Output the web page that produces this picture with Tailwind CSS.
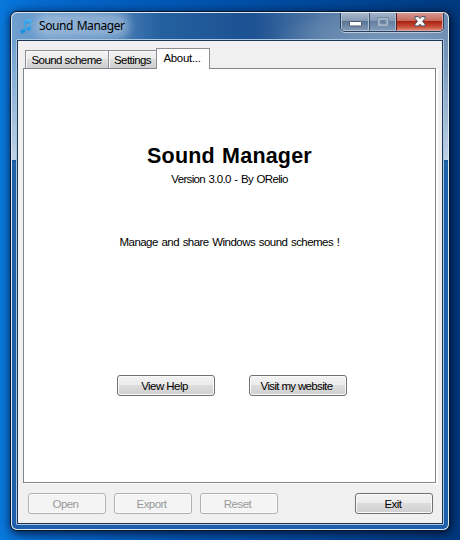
<!DOCTYPE html>
<html lang="en">
<head>
<meta charset="utf-8">
<title>Sound Manager</title>
<script src="https://cdn.jsdelivr.net/npm/@tailwindcss/browser@4"></script>
</head>
<body class="h-[540px] w-[460px] overflow-hidden bg-[linear-gradient(90deg,#0878dc_0%,#0569ce_8%,#0052ad_45%,#004390_80%,#00397e_100%)] pl-[10px] pt-[11px] font-['Liberation_Sans',Arial,sans-serif] text-[11.5px] leading-[13px] tracking-[-0.55px] text-black [word-spacing:1px]">
<main class="h-[520px] w-[440px] rounded-[7px] border border-[#07182d] bg-[#dce9f4] p-px shadow-[1px_2px_8px_1px_rgba(0,8,30,0.75)]">
  <div class="flex h-full flex-col overflow-hidden rounded-[5px] bg-[linear-gradient(180deg,transparent_0,transparent_147px,#17568f_147px,#1d61a9_149px,#1d5faa_100%),radial-gradient(ellipse_110px_34px_at_370px_28px,#7594b7_0%,transparent_100%),linear-gradient(180deg,transparent_27px,#bdd2e7_147px),linear-gradient(90deg,#6f9fcf_0,#5589be_90px,#24609f_150px,#1c5192_240px,#5279a5_310px,#7794b5_400px,#6c8cb1_100%)] px-[4px]">
    <header class="flex h-[26px] shrink-0 items-start">
      <svg class="ml-[4px] mt-[5px] h-[16px] w-[12px]" viewBox="0 0 12 16">
        <defs><linearGradient id="note" x2="0" y2="1"><stop stop-color="#5cc4f5"/><stop offset="1" stop-color="#148be0"/></linearGradient></defs>
        <path d="M4 2.8 11.2.8v3.4L4 6z" fill="url(#note)"/>
        <path d="M4.7 3v10M10.5 1.5v9" fill="none" stroke="#38a9e8" stroke-width="1.5"/>
        <ellipse cx="2.8" cy="13.4" rx="2.6" ry="2" transform="rotate(-20 2.8 13.4)" fill="#198fe0"/>
        <ellipse cx="8.8" cy="10.8" rx="2.4" ry="1.9" transform="rotate(-20 8.8 10.8)" fill="#239be5"/>
      </svg>
      <h1 class="ml-[7px] mt-[4px] whitespace-nowrap rounded-full bg-[#b4cae2]/55 font-['Noto_Sans','Open_Sans',sans-serif] text-[12px] leading-[17px] tracking-[-0.42px] shadow-[0_0_9px_5px_rgba(180,202,226,0.55)]">Sound Manager</h1>
      <div class="ml-auto -mt-px flex h-[20px] w-[104px] overflow-hidden rounded-b-[5px] border border-t-0 border-[#263f5e] shadow-[0_1px_0_#b8cbdd]">
        <button aria-label="Minimize" class="flex w-[28px] items-center justify-center border border-[#b3c2d3] bg-[linear-gradient(#a9b9cc_0%,#8499b3_46%,#577392_47%,#8098b4_100%)]">
          <svg class="mt-[4px] h-[6px] w-[13px]" viewBox="0 0 13 6"><rect x=".5" y=".5" width="12" height="4.5" rx=".7" fill="#fff" stroke="#4a5668"/></svg>
        </button>
        <button aria-label="Maximize" class="flex w-[27px] items-center justify-center border border-l-[#3b5370] border-[#a9bace] bg-[linear-gradient(#a2b4ca_0%,#8499b5_46%,#617d9f_47%,#8099b8_100%)]">
          <svg class="h-[10px] w-[12px]" viewBox="0 0 12 10"><path d="M1.5 1.5h9v7h-9z" fill="none" stroke="#a7b5c6" stroke-width="2.5"/><path d="M.5.5h11v9H.5zM3.5 3.5h5v3h-5z" fill="none" stroke="#718aa7"/></svg>
        </button>
        <button aria-label="Close" class="flex flex-1 items-center justify-center border border-l-[#54212a] border-[#dda49b] bg-[linear-gradient(#d6988f_0%,#c6695c_46%,#a8200f_47%,#c64c37_80%,#d98572_100%)]">
          <svg class="h-[11px] w-[12px]" viewBox="0 0 12 11"><path d="M1 .7h3.5L6 2.5 7.5.7H11v1.8L8.6 5.3 11 8.2V10H7.5L6 8.2 4.5 10H1V8.2l2.4-2.9L1 2.5z" fill="#f8f8f8" stroke="#424d60"/></svg>
        </button>
      </div>
    </header>
    <section class="flex h-[486px] flex-col rounded-[1px] border border-[#a9c6e2]">
      <div class="flex flex-1 flex-col border border-[#1c3554] bg-[#f0f0f0] px-[5px] pt-[7px]">
        <nav class="relative z-10 -mb-px flex h-[21px] items-end pl-[2px]">
          <button class="mb-px h-[18px] w-[84px] whitespace-nowrap border border-b-0 border-[#8c8e96] bg-[linear-gradient(#f3f3f3_0%,#ebebeb_48%,#dddddd_50%,#cfcfcf_100%)] pt-px pr-px shadow-[inset_1px_1px_0_#fafafa]">Sound scheme</button>
          <button class="-ml-px mb-px h-[18px] w-[49px] whitespace-nowrap border border-b-0 border-[#8c8e96] bg-[linear-gradient(#f3f3f3_0%,#ebebeb_48%,#dddddd_50%,#cfcfcf_100%)] pt-px shadow-[inset_1px_1px_0_#fafafa]">Settings</button>
          <button class="-ml-px h-[21px] w-[54px] border border-b-0 border-[#8c8e96] bg-white pb-[2px] pr-[2px] tracking-[-0.3px]">About...</button>
        </nav>
        <article class="flex h-[415px] w-[413px] flex-col items-center border border-[#82838d] bg-white shadow-[1px_1px_0_#fff,2px_1px_0_#fff]">
          <h2 class="mt-[74px] whitespace-nowrap text-[21.5px] font-bold leading-[26px] tracking-[0.2px]">Sound Manager</h2>
          <p class="mt-[4px] whitespace-nowrap tracking-[-0.67px]">Version 3.0.0 - By ORelio</p>
          <p class="mt-[50px] whitespace-nowrap">Manage and share Windows sound schemes !</p>
          <div class="mt-[126px] flex gap-[34px] pl-[5px]">
            <button class="h-[21px] w-[98px] whitespace-nowrap rounded-[3px] border border-[#707070] bg-[linear-gradient(#f2f2f2_0%,#ebebeb_48%,#dddddd_50%,#cfcfcf_100%)] pr-[3px] pt-px shadow-[inset_0_0_0_1px_#fafafa]">View Help</button>
            <button class="h-[21px] w-[98px] whitespace-nowrap rounded-[3px] border border-[#707070] bg-[linear-gradient(#f2f2f2_0%,#ebebeb_48%,#dddddd_50%,#cfcfcf_100%)] pr-[3px] pt-px tracking-[-0.65px] shadow-[inset_0_0_0_1px_#fafafa]">Visit my website</button>
          </div>
        </article>
        <footer class="mt-[10px] flex gap-[8px] pl-[5px] pr-[4px]">
          <button disabled class="h-[21px] w-[78px] rounded-[3px] border border-[#adb2b5] bg-[#f4f4f4] pr-[3px] pt-px text-[#999] shadow-[inset_0_0_0_1px_#fafafa]">Open</button>
          <button disabled class="h-[21px] w-[78px] rounded-[3px] border border-[#adb2b5] bg-[#f4f4f4] pr-[3px] pt-px text-[#999] shadow-[inset_0_0_0_1px_#fafafa]">Export</button>
          <button disabled class="h-[21px] w-[78px] rounded-[3px] border border-[#adb2b5] bg-[#f4f4f4] pr-[3px] pt-px text-[#999] shadow-[inset_0_0_0_1px_#fafafa]">Reset</button>
          <button class="ml-auto h-[21px] w-[78px] rounded-[3px] border border-[#707070] bg-[linear-gradient(#f2f2f2_0%,#ebebeb_48%,#dddddd_50%,#cfcfcf_100%)] pr-[2px] pt-px shadow-[inset_0_0_0_1px_#fafafa]">Exit</button>
        </footer>
      </div>
    </section>
  </div>
</main>
</body>
</html>
